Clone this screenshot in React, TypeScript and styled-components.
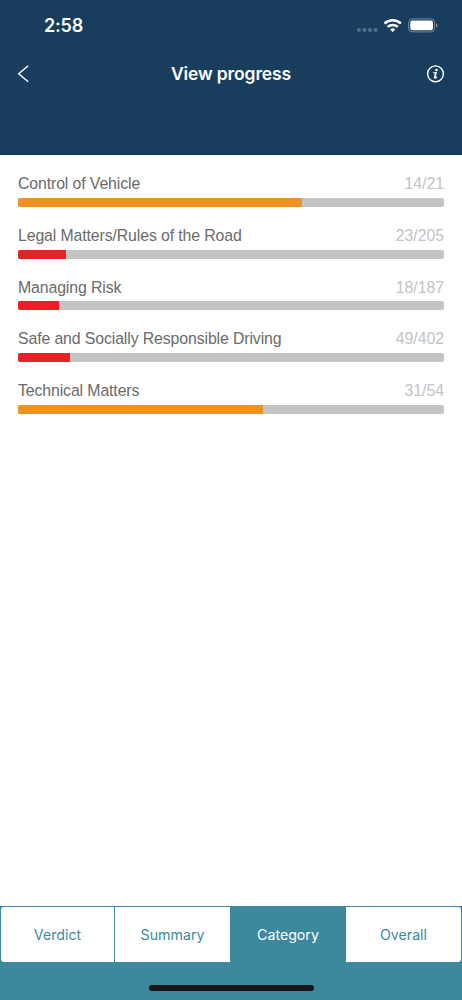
import React from "react";
import styled, { createGlobalStyle } from "styled-components";

const GlobalStyle = createGlobalStyle`
  * { box-sizing: border-box; }
  body { margin: 0; background: #fff; }
`;

const Screen = styled.div`
  display: flex;
  flex-direction: column;
  width: 462px;
  height: 1000px;
  overflow: hidden;
  background: #fff;
  font-family: Inter, "Liberation Sans", sans-serif;
`;

const Header = styled.header`
  height: 155px;
  background: #183d5d;
  color: #fff;
`;

const StatusBar = styled.div`
  display: flex;
  align-items: center;
  justify-content: space-between;
  height: 50px;
  padding: 0 24px 0 44px;
`;

const Clock = styled.time`
  font-size: 18px;
  line-height: 22px;
  font-weight: 600;
  letter-spacing: -0.2px;
  padding-top: 2px;
`;

const StatusIcons = styled.svg`
  display: block;
  width: 84px;
  height: 50px;
`;

const TitleBar = styled.div`
  display: grid;
  grid-template-columns: 40px 1fr 40px;
  align-items: center;
  height: 48px;
  padding: 0 8px;
`;

const Title = styled.h1`
  margin: 0;
  font-size: 17.5px;
  line-height: 24px;
  font-weight: 600;
  letter-spacing: -0.12px;
  text-align: center;
`;

const IconButton = styled.button`
  display: flex;
  align-items: center;
  justify-content: center;
  height: 40px;
  padding: 0;
  border: 0;
  background: none;
  color: inherit;
`;

const CategoryList = styled.main`
  flex: 1;
  padding: 17.4px 18px 0;
`;

const CategoryRow = styled.section`
  height: 51.67px;
`;

const RowText = styled.div`
  display: flex;
  justify-content: space-between;
  height: 25.6px;
  font: 15.85px/24px "Liberation Sans", Arial, sans-serif;
  white-space: nowrap;
`;

const Name = styled.span`
  color: #6a6a6a;
  letter-spacing: -0.115px;
`;

const Score = styled.span`
  color: #c3c3c3;
  letter-spacing: -0.05px;
`;

const Track = styled.div`
  height: 9px;
  border-radius: 2px;
  overflow: hidden;
  background: #c4c4c4;
`;

const Fill = styled.div<{ $tone: "amber" | "red" }>`
  height: 100%;
  background: ${({ $tone }) => ($tone === "amber" ? "#f0921f" : "#e82126")};
`;

const Footer = styled.footer`
  display: flex;
  flex-direction: column;
  align-items: center;
  height: 94px;
  padding: 1px 1px 9px;
  background: #3c889c;
`;

const Tabs = styled.nav`
  display: grid;
  grid-template-columns: 113px 116px 116px 1fr;
  width: 100%;
  height: 55px;
  border-radius: 3px;
  overflow: hidden;
`;

const Tab = styled.button<{ $active: boolean; $divided: boolean }>`
  padding: 0;
  border: 0;
  border-left: ${({ $divided }) => ($divided ? "1px solid #3c889c" : "0")};
  background: ${({ $active }) => ($active ? "#3c889c" : "#fff")};
  color: ${({ $active }) => ($active ? "#fff" : "#3c889c")};
  font: 400 14.2px/20px Inter, sans-serif;
  letter-spacing: 0;
`;

const HomeIndicator = styled.div`
  width: 165px;
  height: 6px;
  margin-top: auto;
  border-radius: 3px;
  background: #161616;
`;

const categories: { name: string; done: number; total: number; tone: "amber" | "red" }[] = [
  { name: "Control of Vehicle", done: 14, total: 21, tone: "amber" },
  { name: "Legal Matters/Rules of the Road", done: 23, total: 205, tone: "red" },
  { name: "Managing Risk", done: 18, total: 187, tone: "red" },
  { name: "Safe and Socially Responsible Driving", done: 49, total: 402, tone: "red" },
  { name: "Technical Matters", done: 31, total: 54, tone: "amber" },
];

const tabs = ["Verdict", "Summary", "Category", "Overall"];

export default function App() {
  return (
    <>
      <GlobalStyle />
      <Screen>
        <Header>
          <StatusBar>
            <Clock>2:58</Clock>
            <StatusIcons viewBox="354 0 84 50" aria-hidden="true">
              <g fill="#fff" fillOpacity=".25">
                <circle cx="358.9" cy="30" r="2.1" />
                <circle cx="364.4" cy="30" r="2.1" />
                <circle cx="370" cy="30" r="2.1" />
                <circle cx="375.6" cy="30" r="2.1" />
              </g>
              <g fill="none" stroke="#fff" strokeWidth="2.5">
                <path d="M384.5 23.5a12 12 0 0 1 16.4 0" />
                <path d="M387.6 26.9a7.5 7.5 0 0 1 10.2 0" />
              </g>
              <path d="M390.1 29.4a3.8 3.8 0 0 1 5.2 0L392.7 32z" fill="#fff" />
              <rect x="408.6" y="18.9" width="26" height="13" rx="3.8" fill="none" stroke="#fff" strokeOpacity=".4" />
              <rect x="410.2" y="20.6" width="22.8" height="9.7" rx="2.2" fill="#fff" />
              <path d="M436 23.2q1.5.6 1.5 2.2t-1.5 2.2z" fill="#fff" fillOpacity=".45" />
            </StatusIcons>
          </StatusBar>
          <TitleBar>
            <IconButton aria-label="Back">
              <svg width="40" height="40" viewBox="8 54 40 40" fill="none" stroke="#fff" strokeWidth="1.4">
                <path d="M28.2 65.8L18.7 73.8L28.2 81.8" />
              </svg>
            </IconButton>
            <Title>View progress</Title>
            <IconButton aria-label="Information">
              <svg width="40" height="40" viewBox="414 54 40 40" fill="none" stroke="#fff">
                <circle cx="435.5" cy="73.8" r="7.9" strokeWidth="1.4" />
                <circle cx="436.5" cy="70" r="1.35" fill="#fff" stroke="none" />
                <path d="M433.4 72.8h2.6l-1.3 4.5q-.2.8.5.6l1.8-.8" strokeWidth="1.6" />
              </svg>
            </IconButton>
          </TitleBar>
        </Header>
        <CategoryList>
          {categories.map(({ name, done, total, tone }) => (
            <CategoryRow key={name}>
              <RowText>
                <Name>{name}</Name>
                <Score>{done}/{total}</Score>
              </RowText>
              <Track>
                <Fill $tone={tone} style={{ width: `${(done / total) * 100}%` }} />
              </Track>
            </CategoryRow>
          ))}
        </CategoryList>
        <Footer>
          <Tabs>
            {tabs.map((label, i) => (
              <Tab key={label} $active={label === "Category"} $divided={i === 1}>
                {label}
              </Tab>
            ))}
          </Tabs>
          <HomeIndicator />
        </Footer>
      </Screen>
    </>
  );
}
